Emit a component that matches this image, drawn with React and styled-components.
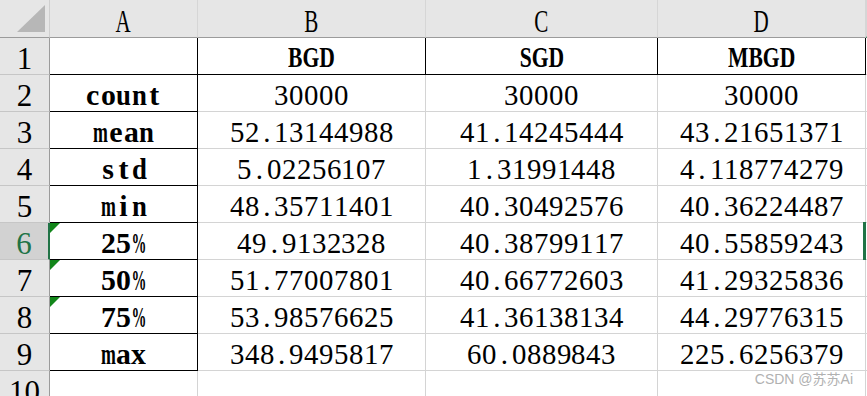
import React from 'react'
import styled, { createGlobalStyle, css } from 'styled-components'

const GlobalStyle = createGlobalStyle`
  html, body {
    margin: 0;
    padding: 0;
    background: #fff;
    overflow: hidden;
  }
`

const GRID = '#d4d4d4'
const HEAD_EDGE = '#9b9b9b'
const GREEN = '#217346'

// advance widths (em) of Liberation Serif, used to squeeze glyphs into a fixed cell
const ADV = {
  '.': 0.25, '%': 1.0, m: 0.833, u: 0.556, n: 0.556, d: 0.556,
  c: 0.444, e: 0.444, t: 0.333, s: 0.389, o: 0.5, a: 0.5, x: 0.5, i: 0.278,
}

const rows = [
  ['', 'BGD', 'SGD', 'MBGD'],
  ['count', '30000', '30000', '30000'],
  ['mean', '52.13144988', '41.14245444', '43.21651371'],
  ['std', '5.02256107', '1.31991448', '4.118774279'],
  ['min', '48.35711401', '40.30492576', '40.36224487'],
  ['25%', '49.9132328', '40.38799117', '40.55859243'],
  ['50%', '51.77007801', '40.66772603', '41.29325836'],
  ['75%', '53.98576625', '41.36138134', '44.29776315'],
  ['max', '348.9495817', '60.0889843', '225.6256379'],
  ['', '', '', ''],
]

const Sheet = styled.div`
  position: relative;
  display: grid;
  grid-template-columns: 50px 148px 228px 232px 208px 1fr;
  grid-template-rows: 38px repeat(10, 37px);
  width: 867px;
  height: 396px;
  overflow: hidden;
  font-family: "Liberation Serif", "Times New Roman", serif;
  color: #000;
`

const Corner = styled.div`
  box-sizing: border-box;
  background: #e6e6e6;
  border-right: 1px solid #cfcfcf;
  border-bottom: 1px solid ${HEAD_EDGE};
  display: flex;
  align-items: flex-end;
  justify-content: flex-end;
  padding: 0 3px 4px 0;
`

const ColHead = styled.div`
  box-sizing: border-box;
  background: #e6e6e6;
  border-right: 1px solid #d6d6d6;
  border-bottom: ${p => (p.$active ? `2px solid ${GREEN}` : `1px solid ${HEAD_EDGE}`)};
  display: flex;
  align-items: center;
  justify-content: center;
  padding-top: 5px;
  font-size: 31px;
  line-height: 1;
  overflow: hidden;
`

const Letter = styled.span`
  display: inline-block;
  transform: scaleX(0.68);
`

const RowHead = styled.div`
  box-sizing: border-box;
  background: ${p => (p.$active ? '#d2d2d2' : '#e6e6e6')};
  color: ${p => (p.$active ? GREEN : '#000')};
  border-right: ${p => (p.$active ? `2px solid ${GREEN}` : `1px solid ${HEAD_EDGE}`)};
  border-bottom: 1px solid #c6c6c6;
  display: flex;
  align-items: center;
  justify-content: center;
  padding-top: 5px;
  font-size: 31px;
  line-height: 1;
`

const Cell = styled.div`
  position: relative;
  box-sizing: border-box;
  border-right: 1px solid ${p => (p.$darkRight ? '#000' : GRID)};
  border-bottom: 1px solid ${p => (p.$darkBottom ? '#000' : GRID)};
  display: flex;
  align-items: center;
  justify-content: center;
  padding-top: 4px;
  font-size: ${p => (p.$title ? 30 : p.$label ? 30 : 29)}px;
  font-weight: ${p => (p.$title || p.$label ? 700 : 400)};
  line-height: 1;
  white-space: nowrap;
  overflow: visible;

  ${p => p.$flag && css`
    &::before {
      content: '';
      position: absolute;
      top: 0;
      left: 0;
      border-top: 10px solid #12861a;
      border-right: 10px solid transparent;
    }
  `}
`

const Title = styled.span`
  display: inline-block;
  padding-bottom: 3px;
  transform: scaleX(0.72);
`

const Glyph = styled.span`
  display: inline-flex;
  justify-content: center;
  width: ${p => p.$w}px;
`

const Ink = styled.span`
  display: inline-block;
  transform: scaleX(${p => p.$k});
`

const EdgeCell = styled.div`
  border-bottom: 1px solid ${GRID};
`

const Selection = styled.div`
  position: absolute;
  left: 863px;
  top: 222px;
  width: 3px;
  height: 38px;
  background: ${GREEN};
`

const Watermark = styled.div`
  position: absolute;
  right: 14px;
  bottom: 8px;
  font-family: "Liberation Sans", "Noto Sans CJK SC", sans-serif;
  font-size: 14px;
  color: #b1b1b1;
  text-shadow: 0 0 2px #fff;
`

function Mono({ text, size, cell }) {
  return text.split('').map((ch, i) => {
    const w = (ADV[ch] ?? 0.5) * size
    const k = Math.min(1, (cell - 0.5) / w)
    return (
      <Glyph key={i} $w={cell}>
        <Ink $k={k.toFixed(3)}>{ch}</Ink>
      </Glyph>
    )
  })
}

function CornerMark() {
  return (
    <svg width="30" height="28" viewBox="0 0 30 28">
      <path d="M1 27 L29 0 L29 27 Z" fill="#b7b7b7" />
    </svg>
  )
}

export default function App() {
  return (
    <>
      <GlobalStyle />
      <Sheet>
        <Corner><CornerMark /></Corner>
        {['A', 'B', 'C', 'D'].map(l => (
          <ColHead key={l}><Letter>{l}</Letter></ColHead>
        ))}
        <ColHead $active />

        {rows.map((row, r) => (
          <React.Fragment key={r}>
            <RowHead $active={r === 5}>{r + 1}</RowHead>
            {row.map((val, c) => {
              const inTable = r < 9
              const isA = c === 0
              const darkRight = inTable && (isA || r === 0)
              const darkBottom = inTable && (isA || r === 0)
              return (
                <Cell
                  key={c}
                  $darkRight={darkRight}
                  $darkBottom={darkBottom}
                  $title={r === 0}
                  $label={isA}
                  $flag={isA && val.endsWith('%')}
                >
                  {r === 0 && val && <Title>{val}</Title>}
                  {r > 0 && val && (isA
                    ? <Mono text={val} size={30} cell={15.4} />
                    : <Mono text={val} size={29} cell={14.9} />)}
                </Cell>
              )
            })}
            <EdgeCell />
          </React.Fragment>
        ))}

        <Selection />
        <Watermark>CSDN @苏苏Ai</Watermark>
      </Sheet>
    </>
  )
}
